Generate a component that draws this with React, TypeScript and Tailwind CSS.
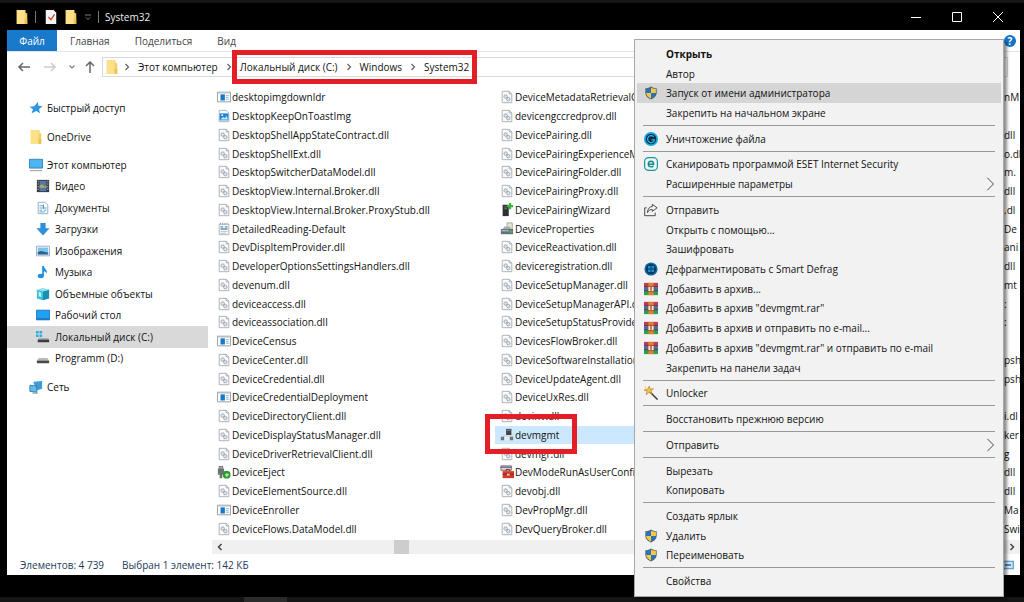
import { ReactNode } from 'react';
import { clsx } from 'clsx';

type FileKind = 'dll' | 'exe' | 'image' | 'text' | 'eject' | 'wizard' | 'props' | 'mgmt' | 'toolbox';

interface FileRow {
  name: string;
  kind: FileKind;
  selected?: boolean;
}

const dll = (name: string): FileRow => ({ name, kind: 'dll' });

const FIRST_COLUMN: FileRow[] = [
  { name: 'desktopimgdownldr', kind: 'exe' },
  { name: 'DesktopKeepOnToastImg', kind: 'image' },
  dll('DesktopShellAppStateContract.dll'),
  dll('DesktopShellExt.dll'),
  dll('DesktopSwitcherDataModel.dll'),
  dll('DesktopView.Internal.Broker.dll'),
  dll('DesktopView.Internal.Broker.ProxyStub.dll'),
  { name: 'DetailedReading-Default', kind: 'text' },
  dll('DevDispItemProvider.dll'),
  dll('DeveloperOptionsSettingsHandlers.dll'),
  dll('devenum.dll'),
  dll('deviceaccess.dll'),
  dll('deviceassociation.dll'),
  { name: 'DeviceCensus', kind: 'exe' },
  dll('DeviceCenter.dll'),
  dll('DeviceCredential.dll'),
  { name: 'DeviceCredentialDeployment', kind: 'exe' },
  dll('DeviceDirectoryClient.dll'),
  dll('DeviceDisplayStatusManager.dll'),
  dll('DeviceDriverRetrievalClient.dll'),
  { name: 'DeviceEject', kind: 'eject' },
  dll('DeviceElementSource.dll'),
  { name: 'DeviceEnroller', kind: 'exe' },
  dll('DeviceFlows.DataModel.dll'),
];

const SECOND_COLUMN: FileRow[] = [
  dll('DeviceMetadataRetrievalClient.dll'),
  dll('devicengccredprov.dll'),
  dll('DevicePairing.dll'),
  dll('DevicePairingExperienceMEM.dll'),
  dll('DevicePairingFolder.dll'),
  dll('DevicePairingProxy.dll'),
  { name: 'DevicePairingWizard', kind: 'wizard' },
  { name: 'DeviceProperties', kind: 'props' },
  dll('DeviceReactivation.dll'),
  dll('deviceregistration.dll'),
  dll('DeviceSetupManager.dll'),
  dll('DeviceSetupManagerAPI.dll'),
  dll('DeviceSetupStatusProvider.dll'),
  dll('DevicesFlowBroker.dll'),
  dll('DeviceSoftwareInstallationClient.dll'),
  dll('DeviceUpdateAgent.dll'),
  dll('DeviceUxRes.dll'),
  dll('devinv.dll'),
  { name: 'devmgmt', kind: 'mgmt', selected: true },
  dll('devmgr.dll'),
  { name: 'DevModeRunAsUserConfig', kind: 'toolbox' },
  dll('devobj.dll'),
  dll('DevPropMgr.dll'),
  dll('DevQueryBroker.dll'),
];

// Ends of the names in the last column
const LAST_COLUMN = [
  'nM', '', 'dll', 'o.dl', 'm.', 'dll', '.dl', 'De', 'ani', 'dll', 'mt', ':',
  ':', '', 'psh', 'psh', '', 'i.dl', 'ker', 'g', 'dll', 'dll', 'Ma', 'Swi',
];

type MenuIcon = 'shield' | 'shredder' | 'eset' | 'share' | 'defrag' | 'rar' | 'wand';

interface MenuEntry {
  label: string;
  icon?: MenuIcon;
  bold?: boolean;
  active?: boolean;
  submenu?: boolean;
}

const MENU: MenuEntry[][] = [
  [
    { label: 'Открыть', bold: true },
    { label: 'Автор' },
    { label: 'Запуск от имени администратора', icon: 'shield', active: true },
    { label: 'Закрепить на начальном экране' },
  ],
  [{ label: 'Уничтожение файла', icon: 'shredder' }],
  [
    { label: 'Сканировать программой ESET Internet Security', icon: 'eset' },
    { label: 'Расширенные параметры', submenu: true },
  ],
  [
    { label: 'Отправить', icon: 'share' },
    { label: 'Открыть с помощью...' },
    { label: 'Зашифровать' },
    { label: 'Дефрагментировать с Smart Defrag', icon: 'defrag' },
    { label: 'Добавить в архив...', icon: 'rar' },
    { label: 'Добавить в архив "devmgmt.rar"', icon: 'rar' },
    { label: 'Добавить в архив и отправить по e-mail...', icon: 'rar' },
    { label: 'Добавить в архив "devmgmt.rar" и отправить по e-mail', icon: 'rar' },
    { label: 'Закрепить на панели задач' },
  ],
  [{ label: 'Unlocker', icon: 'wand' }],
  [{ label: 'Восстановить прежнюю версию' }],
  [{ label: 'Отправить', submenu: true }],
  [{ label: 'Вырезать' }, { label: 'Копировать' }],
  [
    { label: 'Создать ярлык' },
    { label: 'Удалить', icon: 'shield' },
    { label: 'Переименовать', icon: 'shield' },
  ],
  [{ label: 'Свойства' }],
];

const Svg = ({ children, className = 'size-4' }: { children: ReactNode; className?: string }) => (
  <svg viewBox="0 0 16 16" fill="none" className={clsx('shrink-0', className)} aria-hidden="true">
    {children}
  </svg>
);

const Folder = ({ className }: { className?: string }) => (
  <Svg className={className}>
    <path d="M2 0h10v3l2 1v12H2z" fill="#f3cf68" />
    <path d="M2 0h9v16H2z" fill="#fde08a" />
    <path d="M11 10h3v6h-3z" fill="#eec04d" />
  </Svg>
);

const FILE_ICONS: Record<FileKind, ReactNode> = {
  dll: (
    <>
      <path d="M2.500 1.500h8l3 3v10h-11z" fill="#fafbfc" stroke="#a3a9ae" />
      <path d="M10.500 1.500v3h3" stroke="#a3a9ae" />
      <circle cx="6.500" cy="7.500" r="2" fill="#dfe5ea" stroke="#98a2ab" />
      <circle cx="9.500" cy="10.500" r="2" fill="#dfe5ea" stroke="#98a2ab" />
    </>
  ),
  exe: (
    <>
      <path d="M.5 2.500h15v11H.5z" fill="#fff" stroke="#8b9299" />
      <path d="M1 3.500h14" stroke="#b9c4ce" />
      <path d="M4 5h5v7H4z" fill="#1979c4" />
      <path d="M10 6.500h4M10 8.500h3M10 10.500h4" stroke="#7fb3dc" />
    </>
  ),
  image: (
    <>
      <path d="M2.500 1.500h8l3 3v10h-11z" fill="#f7fafd" stroke="#9db4c8" />
      <path d="M3 5h10v8H3z" fill="#2286cf" />
      <path d="M4 12l3-3 2 1.500L11 8l1.500 4z" fill="#c9ecff" />
      <circle cx="6" cy="7" r="1" fill="#fff" />
    </>
  ),
  text: (
    <>
      <path d="M2.500 2.500h11v12h-11z" fill="#fafafa" stroke="#a7adb3" />
      <path d="M4 1v2M6.500 1v2M9 1v2M11.500 1v2" stroke="#8d959c" />
      <path d="M4 5.500h3M9 5.500h3M4 8h8" stroke="#4e93b8" strokeWidth="1.500" />
      <path d="M4 11h8M4 13h6" stroke="#b6bcc2" />
    </>
  ),
  eject: (
    <>
      <path d="M2 1h5v3h1v7H6v4H3v-4H1V4h1z" fill="#6d7470" />
      <path d="M3 2h1v2H3zM5 2h1v2H5z" fill="#d9dcda" />
      <circle cx="11" cy="11" r="4.500" fill="#2f9a36" />
      <path d="M9 11l2-2 3 2-3 3z" fill="#a8e29a" />
    </>
  ),
  wizard: (
    <>
      <path d="M3 2h7v13H3z" fill="#2d3133" />
      <path d="M5 4.500h3M5 6.500h3" stroke="#7d8486" />
      <path d="M11.500 0v7M8 3.500h7" stroke="#31b53a" strokeWidth="2.500" />
    </>
  ),
  props: (
    <>
      <path d="M8 1h6v8H8z" fill="#e9e6cf" stroke="#9aa19c" />
      <path d="M3 8l2-3h6l2 3z" fill="#9fb0b6" />
      <path d="M1 8h14v6H1z" fill="#63757c" />
      <path d="M2 10h8" stroke="#d6dfe2" />
      <path d="M11 10h3v2h-3z" fill="#58b660" />
    </>
  ),
  mgmt: (
    <>
      <path d="M7 1h6v7H7z" fill="#3d444a" />
      <path d="M8 2.500h4" stroke="#9ea7ad" />
      <path d="M3 8h10l1 2H2z" fill="#d3dade" />
      <path d="M1 10h4v4H1zM11 10h4v4h-4z" fill="#6b747a" />
      <path d="M5 10h6v4H5z" fill="#e5ebee" />
    </>
  ),
  toolbox: (
    <>
      <path d="M1 1h12v5H1z" fill="#e9d6d2" stroke="#8d5750" />
      <path d="M1 2.500h12" stroke="#4671a8" strokeWidth="1.500" />
      <path d="M7 7V5h4v2" stroke="#6b2621" />
      <path d="M3 7h13v8H3z" fill="#cf3a30" />
      <path d="M3 10.500h13" stroke="#84201a" />
      <path d="M8 10h3v2H8z" fill="#f2d9a0" />
    </>
  ),
};

const MENU_ICONS: Record<MenuIcon, ReactNode> = {
  shield: (
    <>
      <path d="M8 .5c2 1.500 4 2 6.500 2v5c0 4-3 6.500-6.500 8-3.500-1.500-6.500-4-6.500-8v-5C4 2.500 6 2 8 .5z" fill="#55606a" />
      <path d="M8 1.700V8H2.400V3.400C4.600 3.300 6.400 2.800 8 1.700z" fill="#2674c0" />
      <path d="M8 1.700V8h5.600V3.400C11.400 3.300 9.600 2.800 8 1.700z" fill="#f6c945" />
      <path d="M2.400 8H8v6.500C5 13 2.600 11 2.400 8z" fill="#f6c945" />
      <path d="M13.600 8H8v6.500c3-1.500 5.400-3.500 5.600-6.500z" fill="#2674c0" />
    </>
  ),
  shredder: (
    <>
      <circle cx="8" cy="8" r="8" fill="#1aa6de" />
      <circle cx="8" cy="8" r="6" fill="#0b2c45" />
      <path d="M11 5.500A4 4 0 1 0 12 9H8.500" stroke="#2bb6ea" strokeWidth="1.500" />
    </>
  ),
  eset: (
    <>
      <rect x=".7" y=".7" width="14.600" height="14.600" rx="4.500" fill="#eaf7f7" stroke="#1d979c" strokeWidth="1.400" />
      <path d="M5 8.200h6C11 6 9.800 4.800 8 4.800S4.900 6.200 4.900 8s1.300 3.300 3.200 3.300c1.200 0 2-.4 2.600-1.100" stroke="#12858b" strokeWidth="1.600" />
    </>
  ),
  share: (
    <>
      <path d="M3 5.500H.8v9h12V11" stroke="#333" />
      <path d="M9.500 1.500l5.500 4-5.500 4V7.500C7 7.300 5 8.500 4 11c0-4 2-6.700 5.500-7z" stroke="#333" strokeLinejoin="round" />
    </>
  ),
  defrag: (
    <>
      <circle cx="8" cy="8" r="7.500" fill="#0f6da8" />
      <circle cx="8" cy="8" r="6" fill="#0a3a66" />
      <path d="M4.500 4.500h3v3h-3zM8.500 4.500h3v3h-3zM4.500 8.500h3v3h-3zM8.500 8.500h3v3h-3z" fill="#1f8fd0" />
    </>
  ),
  rar: (
    <>
      <path d="M0 1h16v5H0z" fill="#c23a55" />
      <path d="M0 6h16v4H0z" fill="#3b6ec6" />
      <path d="M0 10h16v5H0z" fill="#2f9f4c" />
      <path d="M0 5.500h16M0 10h16" stroke="#4a2838" />
      <path d="M5 1h6v14H5z" fill="#e0812f" />
      <path d="M4.500 5h7v6h-7z" fill="#f3e8d4" stroke="#8a4a26" />
      <path d="M8 5v5" stroke="#b23a28" strokeWidth="1.500" />
    </>
  ),
  wand: (
    <>
      <path d="M6 6l9.500 9.500" stroke="#3d3429" strokeWidth="1.600" />
      <path d="M6 0l1 3.500L11 3 8 5.500 9.500 9 6 7.200 2.500 10 3.500 6 0 4.500 4 3.700z" fill="#f5c043" stroke="#a8701c" strokeWidth=".6" />
      <path d="M1 1l1.500 1.500" stroke="#e3a32c" />
    </>
  ),
};

const PLACES: { label: string; active?: boolean; icon: ReactNode }[] = [
  {
    label: 'Видео',
    icon: (
      <>
        <path d="M1 1h14v14H1z" fill="#33373d" />
        <path d="M4 2h8v12H4z" fill="#5379a6" />
        <path d="M4 8l3-2 3 3 2-2v3H4z" fill="#bca860" />
        <path d="M2.500 2v12M13.500 2v12" stroke="#c4c8cc" strokeDasharray="1.500 1.500" />
      </>
    ),
  },
  {
    label: 'Документы',
    icon: (
      <>
        <path d="M2.500 1.500h8l3 3v10h-11z" fill="#fafdff" stroke="#90a8b8" />
        <path d="M4 5.500h4M4 8h8M4 10.500h3M9 10.500h3M4 12.500h6" stroke="#4ba0ca" />
        <path d="M8.500 4v5" stroke="#3b83ae" />
      </>
    ),
  },
  { label: 'Загрузки', icon: <path d="M5 1h6v6h4.500L8 15.500.5 7H5z" fill="#2f8fdc" /> },
  {
    label: 'Изображения',
    icon: (
      <>
        <path d="M.5 2.500h15v11H.5z" fill="#fff" stroke="#8aa6bd" />
        <path d="M2 4h12v8H2z" fill="#7fc2ee" />
        <path d="M2 9l4-1 8 2v2H2z" fill="#2c638e" />
      </>
    ),
  },
  {
    label: 'Музыка',
    icon: (
      <>
        <ellipse cx="5.500" cy="12.500" rx="3.500" ry="2.500" fill="#1e90dc" />
        <path d="M7 1h2c0 3 4.500 4 3.500 9-.7-2-2-3-3.500-3v5.500H7z" fill="#1e90dc" />
      </>
    ),
  },
  {
    label: 'Объемные объекты',
    icon: (
      <>
        <path d="M1 3l7-2 7 2-7 2z" fill="#8ae3ee" />
        <path d="M1 3l7 2v10l-7-2z" fill="#38bfd3" />
        <path d="M15 3L8 5v10l7-2z" fill="#1691b5" />
        <path d="M3 5.500l3 1v5l-3-1z" fill="#c9f5f8" />
      </>
    ),
  },
  {
    label: 'Рабочий стол',
    icon: (
      <>
        <path d="M.5 2.500h15v11H.5z" fill="#22a0f3" stroke="#1273bb" />
        <path d="M1 12.500h14" stroke="#0f5f9e" />
      </>
    ),
  },
  {
    label: 'Локальный диск (C:)',
    active: true,
    icon: (
      <>
        <path d="M0 1h3v3H0zM4 1h3v3H4zM0 5h3v3H0zM4 5h3v3H4z" fill="#22b0e0" />
        <path d="M3 9h11l1 2H2z" fill="#a9adb0" />
        <path d="M2 11h13v3H2z" fill="#383c3f" />
      </>
    ),
  },
  {
    label: 'Programm (D:)',
    icon: (
      <>
        <path d="M3 8h10l2 3H1z" fill="#b6babd" />
        <path d="M1 11h14v3H1z" fill="#45494c" />
      </>
    ),
  },
];

function Chevron() {
  return (
    <Svg className="size-2">
      <path d="M5 2l6 6-6 6" stroke="#666" strokeWidth="2.500" />
    </Svg>
  );
}

function FileColumn({ files, className }: { files: FileRow[]; className: string }) {
  return (
    <ul className={clsx('flex h-full flex-col', className)}>
      {files.map(file => (
        <li
          key={file.name}
          className={clsx('relative flex min-h-0 flex-1 pl-[5px]', file.selected && 'bg-[#cce8ff]')}
        >
          <button className="flex min-w-0 flex-1 items-center gap-px whitespace-nowrap">
            <Svg className="size-3.5">{FILE_ICONS[file.kind]}</Svg>
            <span>{file.name}</span>
          </button>
          {file.selected && (
            <span className="absolute -top-3 -left-2.5 z-10 h-10 w-[92px] border-[5px] border-[#e31e26]" />
          )}
        </li>
      ))}
    </ul>
  );
}

function TitleBar() {
  return (
    <header className="flex h-[27px] shrink-0 items-center bg-black pl-2 text-[#eee]">
      <Folder className="size-3.5" />
      <span className="ml-1.5 h-3 w-px bg-[#777]" />
      <button className="ml-2" aria-label="Свойства">
        <Svg className="size-3.5">
          <path d="M2 0h9l3 3v13H2z" fill="#f3f3f3" />
          <path d="M5 8l3 3 4-6" stroke="#d2472c" strokeWidth="1.500" />
        </Svg>
      </button>
      <button className="ml-1.5" aria-label="Новая папка">
        <Folder className="size-3.5" />
      </button>
      <button className="ml-1.5 text-[#aaa]" aria-label="Настройка панели">
        <Svg className="size-2">
          <path d="M2 4h12M4 9l4 4 4-4" stroke="currentColor" strokeWidth="1.500" />
        </Svg>
      </button>
      <span className="ml-1.5 h-3 w-px bg-[#777]" />
      <h1 className="ml-1.5">System32</h1>
      <div className="ml-auto flex items-center gap-[25px] pr-3.5">
        <button aria-label="Свернуть">
          <Svg>
            <path d="M3 8.500h10" stroke="#fff" />
          </Svg>
        </button>
        <button aria-label="Развернуть">
          <Svg>
            <path d="M3.500 3.500h9v9h-9z" stroke="#fff" />
          </Svg>
        </button>
        <button aria-label="Закрыть">
          <Svg>
            <path d="M3 3l10 10M13 3L3 13" stroke="#fff" />
          </Svg>
        </button>
      </div>
    </header>
  );
}

function AddressBar() {
  return (
    <nav className="flex h-[37px] shrink-0 items-start border-t border-[#e4e4e4] pt-[5px] pr-3 pl-[9px] whitespace-nowrap">
      <div className="flex h-5 items-center">
        <button aria-label="Назад">
          <Svg>
            <path d="M14 8H3M7 4L3 8l4 4" stroke="#666" strokeWidth="1.500" />
          </Svg>
        </button>
        <button className="ml-2.5" aria-label="Вперед">
          <Svg>
            <path d="M2 8h11M9 4l4 4-4 4" stroke="#ccc" strokeWidth="1.500" />
          </Svg>
        </button>
        <button className="ml-2.5" aria-label="Последние">
          <Svg className="size-2">
            <path d="M3 5l5 5 5-5" stroke="#888" strokeWidth="2.500" />
          </Svg>
        </button>
        <button className="ml-1.5" aria-label="Вверх">
          <Svg>
            <path d="M8 14V3M4 7l4-4 4 4" stroke="#666" strokeWidth="1.500" />
          </Svg>
        </button>
      </div>
      <div className="ml-1 flex h-5 flex-1 items-center gap-[7px] border border-[#d9d9d9] pl-0.5">
        <div className="flex items-center gap-1">
          <Folder className="size-3.5" />
          <Chevron />
        </div>
        <button>Этот компьютер</button>
        <Chevron />
        <div className="relative flex items-center gap-[7px] pr-2">
          <button>Локальный диск (C:)</button>
          <Chevron />
          <button>Windows</button>
          <Chevron />
          <button>System32</button>
          <span className="absolute -inset-y-[9px] right-0 -left-2 z-10 border-[5px] border-[#e31e26]" />
        </div>
      </div>
    </nav>
  );
}

function Sidebar() {
  const root = 'flex h-[22px] shrink-0 items-center gap-1 pl-[22px]';
  return (
    <aside className="flex w-[201px] shrink-0 flex-col pt-[9px] whitespace-nowrap">
      <button className={root}>
        <Svg className="size-3.5">
          <path d="M10 1l.8 4.500L15.500 6l-4 3 1 5-4-2.500L3 14l1.500-4.500L.5 6.500 6 6z" fill="#2f96e0" />
        </Svg>
        Быстрый доступ
      </button>
      <button className={clsx(root, 'mt-[7px]')}>
        <Folder className="size-3.5" />
        OneDrive
      </button>
      <div className="mt-1.5 flex h-[215px] flex-col">
        <button className="flex flex-1 items-center gap-1 pl-[22px]">
          <Svg className="size-3.5">
            <path d="M.5 1.500h15v10H.5z" fill="#4db4f0" stroke="#2b7cb5" />
            <path d="M1 14.500h14" stroke="#84909a" />
          </Svg>
          Этот компьютер
        </button>
        {PLACES.map(place => (
          <button
            key={place.label}
            className={clsx('flex flex-1 items-center gap-[5px] pl-[29px]', place.active && 'bg-[#d9d9d9]')}
          >
            <Svg className="size-3.5">{place.icon}</Svg>
            {place.label}
          </button>
        ))}
      </div>
      <button className={clsx(root, 'mt-[7px]')}>
        <Svg className="size-3.5">
          <path d="M5 2l10-1v9l-7 2z" fill="#3c9bd8" />
          <path d="M1 6l8 1v7l-8-1z" fill="#68b8e8" stroke="#2a79b0" />
          <path d="M4 15h6" stroke="#6e8593" />
        </Svg>
        Сеть
      </button>
    </aside>
  );
}

function ContextMenu() {
  return (
    <div
      role="menu"
      className="absolute top-[39px] right-5 bottom-[5px] z-20 flex w-[370px] flex-col border border-[#a8a8a8] bg-[#f2f2f2] pt-1 pb-[5px] shadow-[3px_3px_3px_rgba(0,0,0,0.45)]"
    >
      {MENU.map((group, i) => (
        <div key={i} className="contents">
          {i > 0 && <hr className="mx-2 my-[2px] h-[2px] shrink-0 border-0 border-t border-[#999]" />}
          {group.map(item => (
            <button
              key={item.label}
              role="menuitem"
              className={clsx(
                'mx-0.5 flex min-h-0 flex-1 items-center pr-1 pl-[7px] whitespace-nowrap',
                item.active && 'bg-[#d5d5d5]',
                item.bold && 'font-bold',
              )}
            >
              <span className="flex w-[22px] shrink-0">
                {item.icon && <Svg className="size-3.5">{MENU_ICONS[item.icon]}</Svg>}
              </span>
              {item.label}
              {item.submenu && (
                <Svg className="ml-auto size-3.5">
                  <path d="M5 1l7 7-7 7" stroke="#333" />
                </Svg>
              )}
            </button>
          ))}
        </div>
      ))}
    </div>
  );
}

export default function App() {
  return (
    <div className="relative flex h-screen flex-col overflow-hidden bg-black font-['Open_Sans','Noto_Sans',sans-serif] text-[10px] leading-4 text-[#111]">
      <div className="h-[3px] shrink-0 bg-[#151515]" />
      <div className="mr-1 ml-[7px] flex min-h-0 flex-1 flex-col bg-white">
        <TitleBar />

        {/* Ribbon tabs */}
        <div className="flex h-[21px] shrink-0 items-center text-[#444]">
          <button className="h-full w-[50px] bg-[#1979ca] text-white">Файл</button>
          <button className="ml-[13px]">Главная</button>
          <button className="ml-[25px]">Поделиться</button>
          <button className="ml-[25px]">Вид</button>
          <button className="mr-1 ml-auto" aria-label="Справка">
            <span className="flex size-3 items-center justify-center rounded-full bg-[#1173c7] font-bold text-white">
              ?
            </span>
          </button>
        </div>

        <AddressBar />

        <div className="flex min-h-0 flex-1">
          <Sidebar />
          <div className="flex min-w-0 flex-1 flex-col pl-1">
            <div className="flex min-h-0 flex-1 overflow-hidden">
              <FileColumn files={FIRST_COLUMN} className="w-[283px] shrink-0" />
              <FileColumn files={SECOND_COLUMN} className="w-[283px] shrink-0" />
              <ul className="ml-auto flex h-full w-4 flex-col">
                {LAST_COLUMN.map((tail, i) => (
                  <li key={i} className="flex min-h-0 flex-1 items-center whitespace-nowrap">
                    {tail}
                  </li>
                ))}
              </ul>
            </div>
            <div className="mt-0.5 flex h-3.5 shrink-0 items-center justify-between bg-[#f0f0f0] px-1">
              <Svg className="size-2">
                <path d="M11 2L5 8l6 6" stroke="#444" strokeWidth="3" />
              </Svg>
              <span className="mr-auto ml-[170px] h-full w-[15px] bg-[#cdcdcd]" />
              <Svg className="size-2">
                <path d="M5 2l6 6-6 6" stroke="#444" strokeWidth="3" />
              </Svg>
            </div>
          </div>
        </div>

        <footer className="flex h-[21px] shrink-0 items-center gap-[18px] pr-1.5 pl-[13px] text-[#1e395b]">
          <span>Элементов: 4 739</span>
          <span>Выбран 1 элемент: 142 КБ</span>
          <Svg className="ml-auto size-3">
            <path d="M1 3h14v10H1z" fill="#cfe5f7" stroke="#4d8fc4" strokeWidth="1.500" />
            <path d="M4 8h8" stroke="#2b6ea8" strokeWidth="2" />
          </Svg>
        </footer>
      </div>

      {/* Taskbar edge */}
      <div className="mt-[22px] flex h-[5px] shrink-0 bg-[#151515]">
        <span className="ml-[244px] w-[43px] bg-[#2b2b2b]" />
      </div>

      <ContextMenu />
    </div>
  );
}
